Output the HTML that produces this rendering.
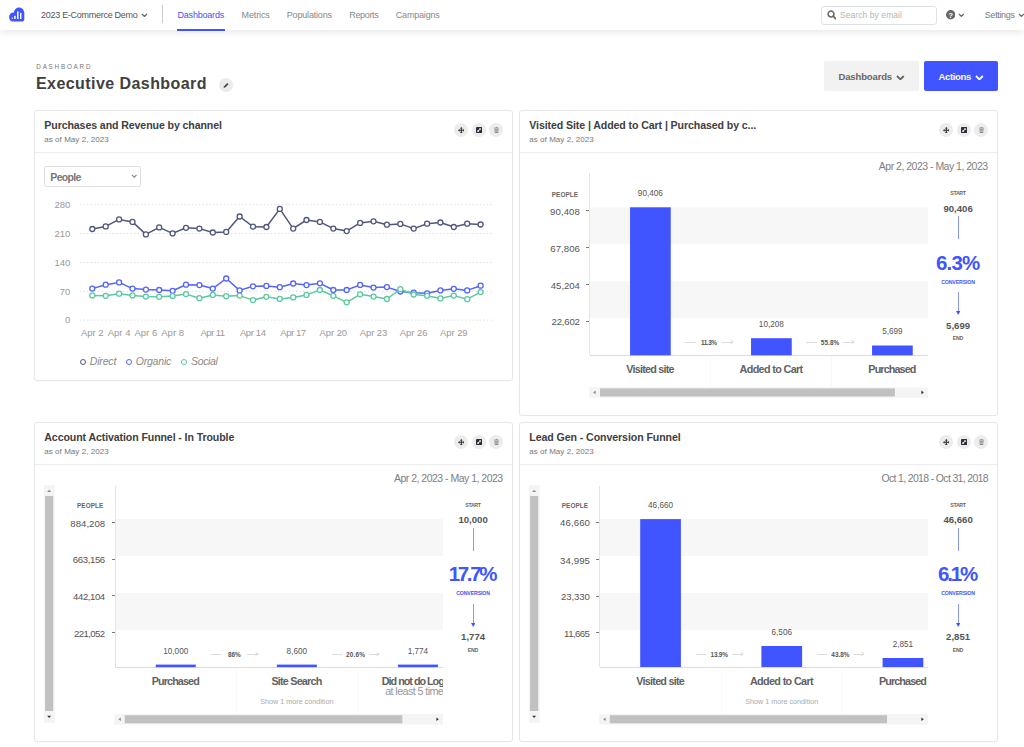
<!DOCTYPE html>
<html><head><meta charset="utf-8"><title>Executive Dashboard</title>
<style>
*{box-sizing:border-box;margin:0;padding:0}
html,body{width:1024px;height:747px;overflow:hidden;background:#fff;font-family:"Liberation Sans",sans-serif;color:#444}
.t{position:absolute;white-space:nowrap;line-height:1}
.abs{position:absolute}
.card{position:absolute;background:#fff;border:1px solid #e6e6e6;border-radius:3px;box-shadow:0 0 2px rgba(0,0,0,0.04)}
.hsep{position:absolute;left:0;right:0;height:1px;background:#ececec}
.ic{position:absolute;width:14px;height:14px;border-radius:50%;background:#ececec}
.band{position:absolute;background:#f6f6f6}
.bar{position:absolute;background:#4054ff}
</style></head><body>

<div class="abs" style="left:0;top:0;width:1024px;height:30px;background:#fff;box-shadow:0 2px 8px rgba(0,0,0,0.10)"></div>
<svg class="abs" style="left:8.8px;top:6.8px" width="16" height="15" viewBox="0 0 16 15">
<path d="M3.9 14.6 C1.6 14.6 0.1 12.6 0.1 10 C0.1 7.3 2.1 5.3 4.7 5.4 C5.3 2.4 7.3 0.4 10 0.4 C13 0.4 15.3 2.8 15.3 6 L15.3 12.2 C15.3 13.6 14.3 14.6 12.9 14.6 Z" fill="#4054ff"/>
<rect x="2.7" y="10.4" width="1.2" height="1.6" rx="0.4" fill="#fff" opacity="0.9"/>
<rect x="5.2" y="8.7" width="1.45" height="3.3" rx="0.5" fill="#fff"/>
<rect x="8.05" y="4.2" width="1.45" height="7.8" rx="0.5" fill="#fff"/>
<rect x="11.0" y="5.8" width="1.4" height="6.2" rx="0.5" fill="#fff"/>
</svg>
<div class="t" style="left:41px;top:15px;font-size:9px;color:#555;font-weight:normal;transform:translate(0,-50%);letter-spacing:-0.277px;margin-right:0.277px;">2023 E-Commerce Demo</div>
<svg class="abs" style="left:140.5px;top:12.95px" width="7" height="4.5" viewBox="0 0 7 4.5"><path d="M1 1 L3.5 3.5 L6 1" fill="none" stroke="#666" stroke-width="1.2"/></svg>
<div class="abs" style="left:161.5px;top:5px;width:1px;height:18px;background:#ccc"></div>
<div class="t" style="left:177.5px;top:15px;font-size:9px;color:#4054ff;font-weight:normal;transform:translate(0,-50%);letter-spacing:-0.203px;margin-right:0.203px;">Dashboards</div>
<div class="abs" style="left:177px;top:29px;width:48px;height:2px;background:#4054ff"></div>
<div class="t" style="left:241.5px;top:15px;font-size:9px;color:#888;font-weight:normal;transform:translate(0,-50%);letter-spacing:-0.114px;margin-right:0.114px;">Metrics</div>
<div class="t" style="left:286.8px;top:15px;font-size:9px;color:#888;font-weight:normal;transform:translate(0,-50%);letter-spacing:-0.185px;margin-right:0.185px;">Populations</div>
<div class="t" style="left:349.3px;top:15px;font-size:9px;color:#888;font-weight:normal;transform:translate(0,-50%);letter-spacing:-0.359px;margin-right:0.359px;">Reports</div>
<div class="t" style="left:395.8px;top:15px;font-size:9px;color:#888;font-weight:normal;transform:translate(0,-50%);letter-spacing:-0.192px;margin-right:0.192px;">Campaigns</div>
<div class="abs" style="left:821px;top:5.5px;width:116px;height:19px;border:1px solid #dce2e7;border-radius:3px;background:#fff"></div>
<svg class="abs" style="left:826.6px;top:10.4px" width="9.8" height="9.8" viewBox="0 0 9 9"><circle cx="3.7" cy="3.7" r="2.7" fill="none" stroke="#666" stroke-width="1.4"/><path d="M5.7 5.7 L8 8" stroke="#666" stroke-width="1.6" stroke-linecap="round"/></svg>
<div class="t" style="left:840px;top:15.3px;font-size:8.5px;color:#b5b5b5;font-weight:normal;transform:translate(0,-50%);letter-spacing:0.070px;margin-right:-0.070px;">Search by email</div>
<svg class="abs" style="left:945.6px;top:10.2px" width="9.4" height="9.4" viewBox="0 0 9 9"><circle cx="4.5" cy="4.5" r="4.5" fill="#666"/><text x="4.5" y="7.2" font-size="7.5" font-weight="bold" text-anchor="middle" fill="#fff" font-family="Liberation Sans">?</text></svg>
<svg class="abs" style="left:958.2px;top:13.0px" width="6.8" height="4.4" viewBox="0 0 6.8 4.4"><path d="M1 1 L3.4 3.4 L5.8 1" fill="none" stroke="#666" stroke-width="1.2"/></svg>
<div class="t" style="left:984.8px;top:15px;font-size:9px;color:#7a7a7a;font-weight:normal;transform:translate(0,-50%);letter-spacing:-0.340px;margin-right:0.340px;">Settings</div>
<svg class="abs" style="left:1017.9px;top:13.0px" width="6.8" height="4.4" viewBox="0 0 6.8 4.4"><path d="M1 1 L3.4 3.4 L5.8 1" fill="none" stroke="#666" stroke-width="1.2"/></svg>
<div class="t" style="left:36.3px;top:66.9px;font-size:6.3px;color:#777;font-weight:normal;transform:translate(0,-50%);letter-spacing:1.788px;margin-right:-1.788px;">DASHBOARD</div>
<div class="t" style="left:36px;top:84.4px;font-size:16px;color:#404040;font-weight:bold;transform:translate(0,-50%);letter-spacing:0.435px;margin-right:-0.435px;">Executive Dashboard</div>
<div class="abs" style="left:219px;top:78.2px;width:14px;height:14px;border-radius:50%;background:#ebebeb"></div>
<svg class="abs" style="left:222.8px;top:82px" width="6.5" height="6.5" viewBox="0 0 6 6"><path d="M0.6 5.4 L0.9 3.9 L3.9 0.9 L5.1 2.1 L2.1 5.1 Z" fill="#444"/></svg>
<div class="abs" style="left:824px;top:61px;width:95px;height:30.4px;background:#f2f2f2;border-radius:2px"></div>
<div class="t" style="left:838.5px;top:77.2px;font-size:9.5px;color:#666;font-weight:bold;transform:translate(0,-50%);letter-spacing:-0.140px;margin-right:0.140px;">Dashboards</div>
<svg class="abs" style="left:896.4px;top:74.8px" width="8.8" height="5.4" viewBox="0 0 8.8 5.4"><path d="M1 1 L4.4 4.4 L7.8 1" fill="none" stroke="#666" stroke-width="1.8"/></svg>
<div class="abs" style="left:924px;top:61px;width:74px;height:30.4px;background:#4054ff;border-radius:2px"></div>
<div class="t" style="left:938.5px;top:77.2px;font-size:9.5px;color:#fff;font-weight:bold;transform:translate(0,-50%);letter-spacing:-0.334px;margin-right:0.334px;">Actions</div>
<svg class="abs" style="left:974.9px;top:74.8px" width="8.8" height="5.4" viewBox="0 0 8.8 5.4"><path d="M1 1 L4.4 4.4 L7.8 1" fill="none" stroke="#fff" stroke-width="1.8"/></svg>
<div class="card" style="left:34px;top:110px;width:479px;height:271px"></div>
<div class="abs" style="left:35px;top:152px;width:477px;height:1px;background:#ececec"></div>
<div class="t" style="left:44.3px;top:124.8px;font-size:10.6px;color:#404040;font-weight:bold;transform:translate(0,-50%);letter-spacing:-0.099px;margin-right:0.099px;">Purchases and Revenue by channel</div>
<div class="t" style="left:44.3px;top:139.9px;font-size:8px;color:#777;font-weight:normal;transform:translate(0,-50%);letter-spacing:0.047px;margin-right:-0.047px;">as of May 2, 2023</div>
<div class="ic" style="left:454.2px;top:122.80000000000001px"></div>
<svg class="abs" style="left:457.9px;top:126.50000000000001px" width="6.6" height="6.6" viewBox="0 0 7 7"><path d="M3.5 0 L5 1.6 L4.05 1.6 L4.05 2.95 L5.4 2.95 L5.4 2 L7 3.5 L5.4 5 L5.4 4.05 L4.05 4.05 L4.05 5.4 L5 5.4 L3.5 7 L2 5.4 L2.95 5.4 L2.95 4.05 L1.6 4.05 L1.6 5 L0 3.5 L1.6 2 L1.6 2.95 L2.95 2.95 L2.95 1.6 L2 1.6 Z" fill="#2e2e3a"/></svg>
<div class="ic" style="left:471.7px;top:122.80000000000001px"></div>
<svg class="abs" style="left:475.59999999999997px;top:126.70000000000002px" width="6.2" height="6.2" viewBox="0 0 64 64"><rect x="0" y="0" width="64" height="64" rx="10" fill="#2e2e3a"/><path d="M30 13 L51 13 L51 34 L44 27 L27 44 L34 51 L13 51 L13 30 L20 37 L37 20 Z" fill="#eee"/></svg>
<div class="ic" style="left:489.2px;top:122.80000000000001px"></div>
<svg class="abs" style="left:493.7px;top:126.80000000000001px" width="5" height="6" viewBox="0 0 5 6"><path d="M0 0.8 H5 V1.5 H0 Z M1.7 0.1 H3.3 V0.8 H1.7 Z M0.5 2 H4.5 L4.2 6 H0.8 Z" fill="#8a8a8a"/><path d="M0.9 3.1 H4.1 M1 4.4 H4" stroke="#eee" stroke-width="0.5"/></svg>
<div class="card" style="left:519px;top:110px;width:479px;height:306px"></div>
<div class="abs" style="left:520px;top:152px;width:477px;height:1px;background:#ececec"></div>
<div class="t" style="left:529.3px;top:124.8px;font-size:10.6px;color:#404040;font-weight:bold;transform:translate(0,-50%);letter-spacing:-0.095px;margin-right:0.095px;">Visited Site | Added to Cart | Purchased by c...</div>
<div class="t" style="left:529.3px;top:139.9px;font-size:8px;color:#777;font-weight:normal;transform:translate(0,-50%);letter-spacing:0.047px;margin-right:-0.047px;">as of May 2, 2023</div>
<div class="ic" style="left:939.2px;top:122.80000000000001px"></div>
<svg class="abs" style="left:942.9000000000001px;top:126.50000000000001px" width="6.6" height="6.6" viewBox="0 0 7 7"><path d="M3.5 0 L5 1.6 L4.05 1.6 L4.05 2.95 L5.4 2.95 L5.4 2 L7 3.5 L5.4 5 L5.4 4.05 L4.05 4.05 L4.05 5.4 L5 5.4 L3.5 7 L2 5.4 L2.95 5.4 L2.95 4.05 L1.6 4.05 L1.6 5 L0 3.5 L1.6 2 L1.6 2.95 L2.95 2.95 L2.95 1.6 L2 1.6 Z" fill="#2e2e3a"/></svg>
<div class="ic" style="left:956.7px;top:122.80000000000001px"></div>
<svg class="abs" style="left:960.6px;top:126.70000000000002px" width="6.2" height="6.2" viewBox="0 0 64 64"><rect x="0" y="0" width="64" height="64" rx="10" fill="#2e2e3a"/><path d="M30 13 L51 13 L51 34 L44 27 L27 44 L34 51 L13 51 L13 30 L20 37 L37 20 Z" fill="#eee"/></svg>
<div class="ic" style="left:974.2px;top:122.80000000000001px"></div>
<svg class="abs" style="left:978.7px;top:126.80000000000001px" width="5" height="6" viewBox="0 0 5 6"><path d="M0 0.8 H5 V1.5 H0 Z M1.7 0.1 H3.3 V0.8 H1.7 Z M0.5 2 H4.5 L4.2 6 H0.8 Z" fill="#8a8a8a"/><path d="M0.9 3.1 H4.1 M1 4.4 H4" stroke="#eee" stroke-width="0.5"/></svg>
<div class="card" style="left:34px;top:422px;width:479px;height:320px"></div>
<div class="abs" style="left:35px;top:464px;width:477px;height:1px;background:#ececec"></div>
<div class="t" style="left:44.3px;top:436.8px;font-size:10.6px;color:#404040;font-weight:bold;transform:translate(0,-50%);letter-spacing:-0.104px;margin-right:0.104px;">Account Activation Funnel - In Trouble</div>
<div class="t" style="left:44.3px;top:451.9px;font-size:8px;color:#777;font-weight:normal;transform:translate(0,-50%);letter-spacing:0.047px;margin-right:-0.047px;">as of May 2, 2023</div>
<div class="ic" style="left:454.2px;top:434.8px"></div>
<svg class="abs" style="left:457.9px;top:438.5px" width="6.6" height="6.6" viewBox="0 0 7 7"><path d="M3.5 0 L5 1.6 L4.05 1.6 L4.05 2.95 L5.4 2.95 L5.4 2 L7 3.5 L5.4 5 L5.4 4.05 L4.05 4.05 L4.05 5.4 L5 5.4 L3.5 7 L2 5.4 L2.95 5.4 L2.95 4.05 L1.6 4.05 L1.6 5 L0 3.5 L1.6 2 L1.6 2.95 L2.95 2.95 L2.95 1.6 L2 1.6 Z" fill="#2e2e3a"/></svg>
<div class="ic" style="left:471.7px;top:434.8px"></div>
<svg class="abs" style="left:475.59999999999997px;top:438.7px" width="6.2" height="6.2" viewBox="0 0 64 64"><rect x="0" y="0" width="64" height="64" rx="10" fill="#2e2e3a"/><path d="M30 13 L51 13 L51 34 L44 27 L27 44 L34 51 L13 51 L13 30 L20 37 L37 20 Z" fill="#eee"/></svg>
<div class="ic" style="left:489.2px;top:434.8px"></div>
<svg class="abs" style="left:493.7px;top:438.8px" width="5" height="6" viewBox="0 0 5 6"><path d="M0 0.8 H5 V1.5 H0 Z M1.7 0.1 H3.3 V0.8 H1.7 Z M0.5 2 H4.5 L4.2 6 H0.8 Z" fill="#8a8a8a"/><path d="M0.9 3.1 H4.1 M1 4.4 H4" stroke="#eee" stroke-width="0.5"/></svg>
<div class="card" style="left:519px;top:422px;width:479px;height:320px"></div>
<div class="abs" style="left:520px;top:464px;width:477px;height:1px;background:#ececec"></div>
<div class="t" style="left:529.3px;top:436.8px;font-size:10.6px;color:#404040;font-weight:bold;transform:translate(0,-50%);letter-spacing:-0.083px;margin-right:0.083px;">Lead Gen - Conversion Funnel</div>
<div class="t" style="left:529.3px;top:451.9px;font-size:8px;color:#777;font-weight:normal;transform:translate(0,-50%);letter-spacing:0.047px;margin-right:-0.047px;">as of May 2, 2023</div>
<div class="ic" style="left:939.2px;top:434.8px"></div>
<svg class="abs" style="left:942.9000000000001px;top:438.5px" width="6.6" height="6.6" viewBox="0 0 7 7"><path d="M3.5 0 L5 1.6 L4.05 1.6 L4.05 2.95 L5.4 2.95 L5.4 2 L7 3.5 L5.4 5 L5.4 4.05 L4.05 4.05 L4.05 5.4 L5 5.4 L3.5 7 L2 5.4 L2.95 5.4 L2.95 4.05 L1.6 4.05 L1.6 5 L0 3.5 L1.6 2 L1.6 2.95 L2.95 2.95 L2.95 1.6 L2 1.6 Z" fill="#2e2e3a"/></svg>
<div class="ic" style="left:956.7px;top:434.8px"></div>
<svg class="abs" style="left:960.6px;top:438.7px" width="6.2" height="6.2" viewBox="0 0 64 64"><rect x="0" y="0" width="64" height="64" rx="10" fill="#2e2e3a"/><path d="M30 13 L51 13 L51 34 L44 27 L27 44 L34 51 L13 51 L13 30 L20 37 L37 20 Z" fill="#eee"/></svg>
<div class="ic" style="left:974.2px;top:434.8px"></div>
<svg class="abs" style="left:978.7px;top:438.8px" width="5" height="6" viewBox="0 0 5 6"><path d="M0 0.8 H5 V1.5 H0 Z M1.7 0.1 H3.3 V0.8 H1.7 Z M0.5 2 H4.5 L4.2 6 H0.8 Z" fill="#8a8a8a"/><path d="M0.9 3.1 H4.1 M1 4.4 H4" stroke="#eee" stroke-width="0.5"/></svg>
<div class="abs" style="left:44px;top:165.5px;width:96.5px;height:21px;border:1px solid #e0e0e0;border-radius:2px;background:#fff"></div>
<div class="t" style="left:50.3px;top:176.8px;font-size:10.5px;color:#777;font-weight:bold;transform:translate(0,-50%);letter-spacing:-0.655px;margin-right:0.655px;">People</div>
<svg class="abs" style="left:130.95px;top:174.475px" width="6.5" height="4.25" viewBox="0 0 6.5 4.25"><path d="M1 1 L3.25 3.25 L5.5 1" fill="none" stroke="#888" stroke-width="1.1"/></svg>
<svg class="abs" style="left:0;top:190px" width="520" height="140" viewBox="0 190 520 140"><line x1="80" x2="492" y1="204.7" y2="204.7" stroke="#dcdcdc" stroke-width="1" stroke-dasharray="1.3 2.3"/><line x1="80" x2="492" y1="233.55" y2="233.55" stroke="#dcdcdc" stroke-width="1" stroke-dasharray="1.3 2.3"/><line x1="80" x2="492" y1="262.4" y2="262.4" stroke="#dcdcdc" stroke-width="1" stroke-dasharray="1.3 2.3"/><line x1="80" x2="492" y1="291.25" y2="291.25" stroke="#dcdcdc" stroke-width="1" stroke-dasharray="1.3 2.3"/><line x1="80" x2="492" y1="320.1" y2="320.1" stroke="#dcdcdc" stroke-width="1" stroke-dasharray="1.3 2.3"/><polyline points="92.3,229.0 105.7,226.4 119.1,219.4 132.5,221.9 145.9,234.4 159.2,227.4 172.6,233.4 186.0,227.8 199.4,228.6 212.8,232.5 226.2,231.9 239.6,216.5 253.0,226.6 266.4,227.0 279.8,208.9 293.2,228.6 306.5,220.0 319.9,221.9 333.3,228.6 346.7,231.1 360.1,222.9 373.5,221.3 386.9,224.7 400.3,223.9 413.7,228.6 427.1,223.7 440.4,222.5 453.8,227.0 467.2,223.7 480.6,224.5" fill="none" stroke="#4f587c" stroke-width="1.5" stroke-linejoin="round"/><circle cx="92.3" cy="229.0" r="2.5" fill="#fff" stroke="#4f587c" stroke-width="1.3"/><circle cx="105.7" cy="226.4" r="2.5" fill="#fff" stroke="#4f587c" stroke-width="1.3"/><circle cx="119.1" cy="219.4" r="2.5" fill="#fff" stroke="#4f587c" stroke-width="1.3"/><circle cx="132.5" cy="221.9" r="2.5" fill="#fff" stroke="#4f587c" stroke-width="1.3"/><circle cx="145.9" cy="234.4" r="2.5" fill="#fff" stroke="#4f587c" stroke-width="1.3"/><circle cx="159.2" cy="227.4" r="2.5" fill="#fff" stroke="#4f587c" stroke-width="1.3"/><circle cx="172.6" cy="233.4" r="2.5" fill="#fff" stroke="#4f587c" stroke-width="1.3"/><circle cx="186.0" cy="227.8" r="2.5" fill="#fff" stroke="#4f587c" stroke-width="1.3"/><circle cx="199.4" cy="228.6" r="2.5" fill="#fff" stroke="#4f587c" stroke-width="1.3"/><circle cx="212.8" cy="232.5" r="2.5" fill="#fff" stroke="#4f587c" stroke-width="1.3"/><circle cx="226.2" cy="231.9" r="2.5" fill="#fff" stroke="#4f587c" stroke-width="1.3"/><circle cx="239.6" cy="216.5" r="2.5" fill="#fff" stroke="#4f587c" stroke-width="1.3"/><circle cx="253.0" cy="226.6" r="2.5" fill="#fff" stroke="#4f587c" stroke-width="1.3"/><circle cx="266.4" cy="227.0" r="2.5" fill="#fff" stroke="#4f587c" stroke-width="1.3"/><circle cx="279.8" cy="208.9" r="2.5" fill="#fff" stroke="#4f587c" stroke-width="1.3"/><circle cx="293.2" cy="228.6" r="2.5" fill="#fff" stroke="#4f587c" stroke-width="1.3"/><circle cx="306.5" cy="220.0" r="2.5" fill="#fff" stroke="#4f587c" stroke-width="1.3"/><circle cx="319.9" cy="221.9" r="2.5" fill="#fff" stroke="#4f587c" stroke-width="1.3"/><circle cx="333.3" cy="228.6" r="2.5" fill="#fff" stroke="#4f587c" stroke-width="1.3"/><circle cx="346.7" cy="231.1" r="2.5" fill="#fff" stroke="#4f587c" stroke-width="1.3"/><circle cx="360.1" cy="222.9" r="2.5" fill="#fff" stroke="#4f587c" stroke-width="1.3"/><circle cx="373.5" cy="221.3" r="2.5" fill="#fff" stroke="#4f587c" stroke-width="1.3"/><circle cx="386.9" cy="224.7" r="2.5" fill="#fff" stroke="#4f587c" stroke-width="1.3"/><circle cx="400.3" cy="223.9" r="2.5" fill="#fff" stroke="#4f587c" stroke-width="1.3"/><circle cx="413.7" cy="228.6" r="2.5" fill="#fff" stroke="#4f587c" stroke-width="1.3"/><circle cx="427.1" cy="223.7" r="2.5" fill="#fff" stroke="#4f587c" stroke-width="1.3"/><circle cx="440.4" cy="222.5" r="2.5" fill="#fff" stroke="#4f587c" stroke-width="1.3"/><circle cx="453.8" cy="227.0" r="2.5" fill="#fff" stroke="#4f587c" stroke-width="1.3"/><circle cx="467.2" cy="223.7" r="2.5" fill="#fff" stroke="#4f587c" stroke-width="1.3"/><circle cx="480.6" cy="224.5" r="2.5" fill="#fff" stroke="#4f587c" stroke-width="1.3"/><polyline points="92.3,288.6 105.7,284.7 119.1,282.4 132.5,288.6 145.9,289.6 159.2,290.0 172.6,290.8 186.0,284.7 199.4,285.1 212.8,288.6 226.2,278.5 239.6,290.4 253.0,286.3 266.4,285.9 279.8,287.2 293.2,283.5 306.5,285.1 319.9,283.3 333.3,290.0 346.7,290.0 360.1,284.9 373.5,287.6 386.9,287.1 400.3,291.5 413.7,292.7 427.1,293.3 440.4,290.4 453.8,288.8 467.2,290.4 480.6,285.7" fill="none" stroke="#5564fb" stroke-width="1.5" stroke-linejoin="round"/><circle cx="92.3" cy="288.6" r="2.5" fill="#fff" stroke="#5564fb" stroke-width="1.3"/><circle cx="105.7" cy="284.7" r="2.5" fill="#fff" stroke="#5564fb" stroke-width="1.3"/><circle cx="119.1" cy="282.4" r="2.5" fill="#fff" stroke="#5564fb" stroke-width="1.3"/><circle cx="132.5" cy="288.6" r="2.5" fill="#fff" stroke="#5564fb" stroke-width="1.3"/><circle cx="145.9" cy="289.6" r="2.5" fill="#fff" stroke="#5564fb" stroke-width="1.3"/><circle cx="159.2" cy="290.0" r="2.5" fill="#fff" stroke="#5564fb" stroke-width="1.3"/><circle cx="172.6" cy="290.8" r="2.5" fill="#fff" stroke="#5564fb" stroke-width="1.3"/><circle cx="186.0" cy="284.7" r="2.5" fill="#fff" stroke="#5564fb" stroke-width="1.3"/><circle cx="199.4" cy="285.1" r="2.5" fill="#fff" stroke="#5564fb" stroke-width="1.3"/><circle cx="212.8" cy="288.6" r="2.5" fill="#fff" stroke="#5564fb" stroke-width="1.3"/><circle cx="226.2" cy="278.5" r="2.5" fill="#fff" stroke="#5564fb" stroke-width="1.3"/><circle cx="239.6" cy="290.4" r="2.5" fill="#fff" stroke="#5564fb" stroke-width="1.3"/><circle cx="253.0" cy="286.3" r="2.5" fill="#fff" stroke="#5564fb" stroke-width="1.3"/><circle cx="266.4" cy="285.9" r="2.5" fill="#fff" stroke="#5564fb" stroke-width="1.3"/><circle cx="279.8" cy="287.2" r="2.5" fill="#fff" stroke="#5564fb" stroke-width="1.3"/><circle cx="293.2" cy="283.5" r="2.5" fill="#fff" stroke="#5564fb" stroke-width="1.3"/><circle cx="306.5" cy="285.1" r="2.5" fill="#fff" stroke="#5564fb" stroke-width="1.3"/><circle cx="319.9" cy="283.3" r="2.5" fill="#fff" stroke="#5564fb" stroke-width="1.3"/><circle cx="333.3" cy="290.0" r="2.5" fill="#fff" stroke="#5564fb" stroke-width="1.3"/><circle cx="346.7" cy="290.0" r="2.5" fill="#fff" stroke="#5564fb" stroke-width="1.3"/><circle cx="360.1" cy="284.9" r="2.5" fill="#fff" stroke="#5564fb" stroke-width="1.3"/><circle cx="373.5" cy="287.6" r="2.5" fill="#fff" stroke="#5564fb" stroke-width="1.3"/><circle cx="386.9" cy="287.1" r="2.5" fill="#fff" stroke="#5564fb" stroke-width="1.3"/><circle cx="400.3" cy="291.5" r="2.5" fill="#fff" stroke="#5564fb" stroke-width="1.3"/><circle cx="413.7" cy="292.7" r="2.5" fill="#fff" stroke="#5564fb" stroke-width="1.3"/><circle cx="427.1" cy="293.3" r="2.5" fill="#fff" stroke="#5564fb" stroke-width="1.3"/><circle cx="440.4" cy="290.4" r="2.5" fill="#fff" stroke="#5564fb" stroke-width="1.3"/><circle cx="453.8" cy="288.8" r="2.5" fill="#fff" stroke="#5564fb" stroke-width="1.3"/><circle cx="467.2" cy="290.4" r="2.5" fill="#fff" stroke="#5564fb" stroke-width="1.3"/><circle cx="480.6" cy="285.7" r="2.5" fill="#fff" stroke="#5564fb" stroke-width="1.3"/><polyline points="92.3,295.4 105.7,295.8 119.1,293.7 132.5,295.4 145.9,296.6 159.2,296.8 172.6,296.0 186.0,294.1 199.4,298.2 212.8,294.9 226.2,296.2 239.6,295.6 253.0,300.1 266.4,296.8 279.8,298.9 293.2,297.4 306.5,294.9 319.9,290.0 333.3,295.8 346.7,302.3 360.1,294.3 373.5,296.6 386.9,299.0 400.3,289.2 413.7,294.5 427.1,295.8 440.4,298.4 453.8,295.6 467.2,299.2 480.6,292.1" fill="none" stroke="#5cc9a0" stroke-width="1.5" stroke-linejoin="round"/><circle cx="92.3" cy="295.4" r="2.5" fill="#fff" stroke="#5cc9a0" stroke-width="1.3"/><circle cx="105.7" cy="295.8" r="2.5" fill="#fff" stroke="#5cc9a0" stroke-width="1.3"/><circle cx="119.1" cy="293.7" r="2.5" fill="#fff" stroke="#5cc9a0" stroke-width="1.3"/><circle cx="132.5" cy="295.4" r="2.5" fill="#fff" stroke="#5cc9a0" stroke-width="1.3"/><circle cx="145.9" cy="296.6" r="2.5" fill="#fff" stroke="#5cc9a0" stroke-width="1.3"/><circle cx="159.2" cy="296.8" r="2.5" fill="#fff" stroke="#5cc9a0" stroke-width="1.3"/><circle cx="172.6" cy="296.0" r="2.5" fill="#fff" stroke="#5cc9a0" stroke-width="1.3"/><circle cx="186.0" cy="294.1" r="2.5" fill="#fff" stroke="#5cc9a0" stroke-width="1.3"/><circle cx="199.4" cy="298.2" r="2.5" fill="#fff" stroke="#5cc9a0" stroke-width="1.3"/><circle cx="212.8" cy="294.9" r="2.5" fill="#fff" stroke="#5cc9a0" stroke-width="1.3"/><circle cx="226.2" cy="296.2" r="2.5" fill="#fff" stroke="#5cc9a0" stroke-width="1.3"/><circle cx="239.6" cy="295.6" r="2.5" fill="#fff" stroke="#5cc9a0" stroke-width="1.3"/><circle cx="253.0" cy="300.1" r="2.5" fill="#fff" stroke="#5cc9a0" stroke-width="1.3"/><circle cx="266.4" cy="296.8" r="2.5" fill="#fff" stroke="#5cc9a0" stroke-width="1.3"/><circle cx="279.8" cy="298.9" r="2.5" fill="#fff" stroke="#5cc9a0" stroke-width="1.3"/><circle cx="293.2" cy="297.4" r="2.5" fill="#fff" stroke="#5cc9a0" stroke-width="1.3"/><circle cx="306.5" cy="294.9" r="2.5" fill="#fff" stroke="#5cc9a0" stroke-width="1.3"/><circle cx="319.9" cy="290.0" r="2.5" fill="#fff" stroke="#5cc9a0" stroke-width="1.3"/><circle cx="333.3" cy="295.8" r="2.5" fill="#fff" stroke="#5cc9a0" stroke-width="1.3"/><circle cx="346.7" cy="302.3" r="2.5" fill="#fff" stroke="#5cc9a0" stroke-width="1.3"/><circle cx="360.1" cy="294.3" r="2.5" fill="#fff" stroke="#5cc9a0" stroke-width="1.3"/><circle cx="373.5" cy="296.6" r="2.5" fill="#fff" stroke="#5cc9a0" stroke-width="1.3"/><circle cx="386.9" cy="299.0" r="2.5" fill="#fff" stroke="#5cc9a0" stroke-width="1.3"/><circle cx="400.3" cy="289.2" r="2.5" fill="#fff" stroke="#5cc9a0" stroke-width="1.3"/><circle cx="413.7" cy="294.5" r="2.5" fill="#fff" stroke="#5cc9a0" stroke-width="1.3"/><circle cx="427.1" cy="295.8" r="2.5" fill="#fff" stroke="#5cc9a0" stroke-width="1.3"/><circle cx="440.4" cy="298.4" r="2.5" fill="#fff" stroke="#5cc9a0" stroke-width="1.3"/><circle cx="453.8" cy="295.6" r="2.5" fill="#fff" stroke="#5cc9a0" stroke-width="1.3"/><circle cx="467.2" cy="299.2" r="2.5" fill="#fff" stroke="#5cc9a0" stroke-width="1.3"/><circle cx="480.6" cy="292.1" r="2.5" fill="#fff" stroke="#5cc9a0" stroke-width="1.3"/></svg>
<div class="t" style="left:70.3px;top:205.0px;font-size:9.5px;color:#999;font-weight:normal;transform:translate(-100%,-50%);">280</div>
<div class="t" style="left:70.3px;top:233.85000000000002px;font-size:9.5px;color:#999;font-weight:normal;transform:translate(-100%,-50%);">210</div>
<div class="t" style="left:70.3px;top:262.7px;font-size:9.5px;color:#999;font-weight:normal;transform:translate(-100%,-50%);">140</div>
<div class="t" style="left:70.3px;top:291.55px;font-size:9.5px;color:#999;font-weight:normal;transform:translate(-100%,-50%);">70</div>
<div class="t" style="left:70.3px;top:320.40000000000003px;font-size:9.5px;color:#999;font-weight:normal;transform:translate(-100%,-50%);">0</div>
<div class="t" style="left:92.3px;top:333.2px;font-size:9.5px;color:#999;font-weight:normal;transform:translate(calc(-50% + -0.031px),-50%);letter-spacing:-0.061px;margin-right:0.061px;">Apr 2</div>
<div class="t" style="left:119.08px;top:333.2px;font-size:9.5px;color:#999;font-weight:normal;transform:translate(calc(-50% + 0.009px),-50%);letter-spacing:0.019px;margin-right:-0.019px;">Apr 4</div>
<div class="t" style="left:145.86px;top:333.2px;font-size:9.5px;color:#999;font-weight:normal;transform:translate(calc(-50% + 0.009px),-50%);letter-spacing:0.019px;margin-right:-0.019px;">Apr 6</div>
<div class="t" style="left:172.64px;top:333.2px;font-size:9.5px;color:#999;font-weight:normal;transform:translate(calc(-50% + 0.009px),-50%);letter-spacing:0.019px;margin-right:-0.019px;">Apr 8</div>
<div class="t" style="left:212.81px;top:333.2px;font-size:9.5px;color:#999;font-weight:normal;transform:translate(calc(-50% + -0.282px),-50%);letter-spacing:-0.564px;margin-right:0.564px;">Apr 11</div>
<div class="t" style="left:252.98000000000002px;top:333.2px;font-size:9.5px;color:#999;font-weight:normal;transform:translate(calc(-50% + -0.183px),-50%);letter-spacing:-0.365px;margin-right:0.365px;">Apr 14</div>
<div class="t" style="left:293.15000000000003px;top:333.2px;font-size:9.5px;color:#999;font-weight:normal;transform:translate(calc(-50% + -0.216px),-50%);letter-spacing:-0.432px;margin-right:0.432px;">Apr 17</div>
<div class="t" style="left:333.32px;top:333.2px;font-size:9.5px;color:#999;font-weight:normal;transform:translate(calc(-50% + -0.033px),-50%);letter-spacing:-0.065px;margin-right:0.065px;">Apr 20</div>
<div class="t" style="left:373.49px;top:333.2px;font-size:9.5px;color:#999;font-weight:normal;transform:translate(calc(-50% + -0.049px),-50%);letter-spacing:-0.098px;margin-right:0.098px;">Apr 23</div>
<div class="t" style="left:413.66px;top:333.2px;font-size:9.5px;color:#999;font-weight:normal;transform:translate(calc(-50% + -0.033px),-50%);letter-spacing:-0.065px;margin-right:0.065px;">Apr 26</div>
<div class="t" style="left:453.83000000000004px;top:333.2px;font-size:9.5px;color:#999;font-weight:normal;transform:translate(calc(-50% + -0.033px),-50%);letter-spacing:-0.065px;margin-right:0.065px;">Apr 29</div>
<div class="abs" style="left:80.10000000000001px;top:358.9px;width:6.2px;height:6.2px;border-radius:50%;border:1.6px solid #4f587c;background:#fff"></div>
<div class="t" style="left:89.8px;top:360.8px;font-size:10.5px;color:#8a8a8a;font-weight:normal;transform:translate(0,-50%);letter-spacing:-0.170px;margin-right:0.170px;font-style:italic;">Direct</div>
<div class="abs" style="left:125.80000000000001px;top:358.9px;width:6.2px;height:6.2px;border-radius:50%;border:1.6px solid #5564fb;background:#fff"></div>
<div class="t" style="left:135.7px;top:360.8px;font-size:10.5px;color:#8a8a8a;font-weight:normal;transform:translate(0,-50%);letter-spacing:-0.195px;margin-right:0.195px;font-style:italic;">Organic</div>
<div class="abs" style="left:181.20000000000002px;top:358.9px;width:6.2px;height:6.2px;border-radius:50%;border:1.6px solid #5cc9a0;background:#fff"></div>
<div class="t" style="left:191.1px;top:360.8px;font-size:10.5px;color:#8a8a8a;font-weight:normal;transform:translate(0,-50%);letter-spacing:-0.367px;margin-right:0.367px;font-style:italic;">Social</div>
<svg class="abs" style="left:0;top:0" width="1024" height="747" viewBox="0 0 1024 747"><rect x="589.9" y="207.3" width="338.1" height="37.0" fill="#f7f7f7"/><rect x="589.9" y="281.3" width="338.1" height="37.0" fill="#f7f7f7"/></svg>
<div class="abs" style="left:589.4px;top:173.3px;width:1px;height:182.0px;background:#e4e4e4"></div>
<div class="abs" style="left:589.9px;top:354.8px;width:338.1px;height:1px;background:#dcdcdc"></div>
<div class="abs" style="left:586.4px;top:210.2px;width:3px;height:1px;background:#777"></div>
<div class="t" style="left:579.9px;top:212.1px;font-size:9.6px;color:#555;font-weight:normal;transform:translate(calc(-100% + 0.106px),-50%);letter-spacing:0.106px;margin-right:-0.106px;">90,408</div>
<div class="abs" style="left:586.4px;top:246.9px;width:3px;height:1px;background:#777"></div>
<div class="t" style="left:579.9px;top:248.8px;font-size:9.6px;color:#555;font-weight:normal;transform:translate(calc(-100% + 0.039px),-50%);letter-spacing:0.039px;margin-right:-0.039px;">67,806</div>
<div class="abs" style="left:586.4px;top:283.6px;width:3px;height:1px;background:#777"></div>
<div class="t" style="left:579.9px;top:285.5px;font-size:9.6px;color:#555;font-weight:normal;transform:translate(calc(-100% + -0.061px),-50%);letter-spacing:-0.061px;margin-right:0.061px;">45,204</div>
<div class="abs" style="left:586.4px;top:320.5px;width:3px;height:1px;background:#777"></div>
<div class="t" style="left:579.9px;top:322.4px;font-size:9.6px;color:#555;font-weight:normal;transform:translate(calc(-100% + -0.194px),-50%);letter-spacing:-0.194px;margin-right:0.194px;">22,602</div>
<div class="t" style="left:564.9px;top:194.5px;font-size:6.4px;color:#666;font-weight:bold;transform:translate(calc(-50% + 0.036px),-50%);letter-spacing:0.073px;margin-right:-0.073px;">PEOPLE</div>
<div class="abs" style="left:589px;top:173px;width:339px;height:225.2px;overflow:hidden">
<svg class="abs" style="left:0;top:0" width="339" height="186"><rect x="41.05" y="34.30" width="40.7" height="148.00" fill="#4054ff"/></svg>
<div class="t" style="left:61.39999999999998px;top:21.20000000000001px;font-size:8.2px;color:#555;transform:translate(-50%,-50%)">90,406</div>
<svg class="abs" style="left:0;top:0" width="339" height="186"><rect x="162.05" y="165.20" width="40.7" height="17.10" fill="#4054ff"/></svg>
<div class="t" style="left:182.39999999999998px;top:152.1px;font-size:8.2px;color:#555;transform:translate(-50%,-50%)">10,208</div>
<svg class="abs" style="left:0;top:0" width="339" height="186"><rect x="283.05" y="172.50" width="40.7" height="9.80" fill="#4054ff"/></svg>
<div class="t" style="left:303.4px;top:159.4px;font-size:8.2px;color:#555;transform:translate(-50%,-50%)">5,699</div>
<div class="t" style="left:119.99999999999997px;top:169.79999999999998px;font-size:6.4px;color:#555;font-weight:bold;transform:translate(calc(-50% + -0.239px),-50%);letter-spacing:-0.479px;margin-right:0.479px;">11.3%</div>
<div class="abs" style="left:96.39999999999998px;top:168.7px;width:10.3px;height:1px;background:#ddd"></div>
<div class="abs" style="left:132.99999999999997px;top:168.7px;width:10px;height:1px;background:#ddd"></div>
<svg class="abs" style="left:140.89999999999998px;top:167.2px" width="4" height="4" viewBox="0 0 4 4"><path d="M0.5 0.3 L3.2 2 L0.5 3.7" fill="none" stroke="#ccc" stroke-width="0.8"/></svg>
<div class="t" style="left:240.99999999999997px;top:169.79999999999998px;font-size:6.4px;color:#555;font-weight:bold;transform:translate(calc(-50% + 0.045px),-50%);letter-spacing:0.091px;margin-right:-0.091px;">55.8%</div>
<div class="abs" style="left:217.39999999999998px;top:168.7px;width:10.3px;height:1px;background:#ddd"></div>
<div class="abs" style="left:253.99999999999997px;top:168.7px;width:10px;height:1px;background:#ddd"></div>
<svg class="abs" style="left:261.9px;top:167.2px" width="4" height="4" viewBox="0 0 4 4"><path d="M0.5 0.3 L3.2 2 L0.5 3.7" fill="none" stroke="#ccc" stroke-width="0.8"/></svg>
<div class="abs" style="left:121.39999999999998px;top:183.3px;width:1px;height:30.899999999999977px;background:#f9f9f9"></div>
<div class="abs" style="left:242.39999999999998px;top:183.3px;width:1px;height:30.899999999999977px;background:#f9f9f9"></div>
<div class="abs" style="left:363.4px;top:183.3px;width:1px;height:30.899999999999977px;background:#f9f9f9"></div>
<div class="t" style="left:61.39999999999998px;top:196.20000000000002px;font-size:10.8px;color:#626262;font-weight:bold;transform:translate(calc(-50% + -0.385px),-50%);letter-spacing:-0.769px;margin-right:0.769px;">Visited site</div>
<div class="t" style="left:182.39999999999998px;top:196.20000000000002px;font-size:10.8px;color:#626262;font-weight:bold;transform:translate(calc(-50% + -0.323px),-50%);letter-spacing:-0.646px;margin-right:0.646px;">Added to Cart</div>
<div class="t" style="left:303.4px;top:196.20000000000002px;font-size:10.8px;color:#626262;font-weight:bold;transform:translate(calc(-50% + -0.446px),-50%);letter-spacing:-0.892px;margin-right:0.892px;">Purchased</div>
</div>
<div class="t" style="left:988.1px;top:166.0px;font-size:10.5px;color:#808080;font-weight:normal;transform:translate(calc(-100% + -0.508px),-50%);letter-spacing:-0.508px;margin-right:0.508px;">Apr 2, 2023 - May 1, 2023</div>
<div class="t" style="left:958.1px;top:194.0px;font-size:5.2px;color:#666;font-weight:bold;transform:translate(calc(-50% + -0.175px),-50%);letter-spacing:-0.349px;margin-right:0.349px;">START</div>
<div class="t" style="left:958.1px;top:208.60000000000002px;font-size:9.6px;color:#555;font-weight:bold;transform:translate(-50%,-50%);">90,406</div>
<div class="abs" style="left:957.6px;top:216.3px;width:1px;height:23.2px;background:#8c96f9"></div>
<div class="t" style="left:958.1px;top:262.5px;font-size:20.5px;color:#4054ff;font-weight:bold;transform:translate(calc(-50% + -0.441px),-50%);letter-spacing:-0.881px;margin-right:0.881px;">6.3%</div>
<div class="t" style="left:958.1px;top:282.6px;font-size:5.2px;color:#4054ff;font-weight:bold;transform:translate(calc(-50% + -0.063px),-50%);letter-spacing:-0.126px;margin-right:0.126px;">CONVERSION</div>
<div class="abs" style="left:957.6px;top:291.8px;width:1px;height:20.5px;background:#8c96f9"></div>
<svg class="abs" style="left:955.9px;top:311.1px" width="4.4" height="4" viewBox="0 0 4.4 4"><path d="M0 0 L4.4 0 L2.2 4 Z" fill="#4054ff"/></svg>
<div class="t" style="left:958.1px;top:325.6px;font-size:9.6px;color:#555;font-weight:bold;transform:translate(-50%,-50%);">5,699</div>
<div class="t" style="left:958.1px;top:339.3px;font-size:5.2px;color:#666;font-weight:bold;transform:translate(calc(-50% + -0.130px),-50%);letter-spacing:-0.260px;margin-right:0.260px;">END</div>
<svg class="abs" style="left:0;top:0" width="1024" height="747" viewBox="0 0 1024 747"><rect x="589.2" y="387.2" width="338.8" height="10.5" fill="#f4f4f4"/><rect x="600" y="388.4" width="294.9" height="8.1" fill="#c1c1c1"/><path d="M595.6 390.59999999999997 L593.2 392.45 L595.6 394.3 Z" fill="#8a8a8a"/><path d="M921.4 390.59999999999997 L923.8 392.45 L921.4 394.3 Z" fill="#333"/></svg>
<svg class="abs" style="left:0;top:0" width="1024" height="747" viewBox="0 0 1024 747"><rect x="115.2" y="519.1" width="327.8" height="37.0" fill="#f7f7f7"/><rect x="115.2" y="593.1" width="327.8" height="37.0" fill="#f7f7f7"/></svg>
<div class="abs" style="left:114.7px;top:486px;width:1px;height:181.0px;background:#e4e4e4"></div>
<div class="abs" style="left:115.2px;top:666.5px;width:327.8px;height:1px;background:#dcdcdc"></div>
<div class="abs" style="left:111.7px;top:521.7px;width:3px;height:1px;background:#777"></div>
<div class="t" style="left:105.2px;top:523.6px;font-size:9.6px;color:#555;font-weight:normal;transform:translate(calc(-100% + 0.028px),-50%);letter-spacing:0.028px;margin-right:-0.028px;">884,208</div>
<div class="abs" style="left:111.7px;top:558.5px;width:3px;height:1px;background:#777"></div>
<div class="t" style="left:105.2px;top:560.4px;font-size:9.6px;color:#555;font-weight:normal;transform:translate(calc(-100% + -0.372px),-50%);letter-spacing:-0.372px;margin-right:0.372px;">663,156</div>
<div class="abs" style="left:111.7px;top:595.3px;width:3px;height:1px;background:#777"></div>
<div class="t" style="left:105.2px;top:597.1999999999999px;font-size:9.6px;color:#555;font-weight:normal;transform:translate(calc(-100% + -0.429px),-50%);letter-spacing:-0.429px;margin-right:0.429px;">442,104</div>
<div class="abs" style="left:111.7px;top:632.0px;width:3px;height:1px;background:#777"></div>
<div class="t" style="left:105.2px;top:633.9px;font-size:9.6px;color:#555;font-weight:normal;transform:translate(calc(-100% + -0.586px),-50%);letter-spacing:-0.586px;margin-right:0.586px;">221,052</div>
<div class="t" style="left:90.2px;top:506.00000000000006px;font-size:6.4px;color:#666;font-weight:bold;transform:translate(calc(-50% + 0.036px),-50%);letter-spacing:0.073px;margin-right:-0.073px;">PEOPLE</div>
<div class="abs" style="left:115px;top:486px;width:328px;height:239px;overflow:hidden">
<svg class="abs" style="left:0;top:0" width="328" height="185"><rect x="40.75" y="178.60" width="40" height="2.50" fill="#4054ff"/></svg>
<div class="t" style="left:60.75px;top:165.50000000000003px;font-size:8.2px;color:#555;transform:translate(-50%,-50%)">10,000</div>
<svg class="abs" style="left:0;top:0" width="328" height="185"><rect x="161.85" y="178.60" width="40" height="2.50" fill="#4054ff"/></svg>
<div class="t" style="left:181.84999999999997px;top:165.50000000000003px;font-size:8.2px;color:#555;transform:translate(-50%,-50%)">8,600</div>
<svg class="abs" style="left:0;top:0" width="328" height="185"><rect x="282.95" y="178.60" width="40" height="2.50" fill="#4054ff"/></svg>
<div class="t" style="left:302.95px;top:165.50000000000003px;font-size:8.2px;color:#555;transform:translate(-50%,-50%)">1,774</div>
<div class="t" style="left:119.39999999999999px;top:168.6px;font-size:6.4px;color:#555;font-weight:bold;transform:translate(calc(-50% + -0.052px),-50%);letter-spacing:-0.103px;margin-right:0.103px;">86%</div>
<div class="abs" style="left:95.8px;top:167.5px;width:10.3px;height:1px;background:#ddd"></div>
<div class="abs" style="left:132.4px;top:167.5px;width:10px;height:1px;background:#ddd"></div>
<svg class="abs" style="left:140.3px;top:166px" width="4" height="4" viewBox="0 0 4 4"><path d="M0.5 0.3 L3.2 2 L0.5 3.7" fill="none" stroke="#ccc" stroke-width="0.8"/></svg>
<div class="t" style="left:240.49999999999997px;top:168.6px;font-size:6.4px;color:#555;font-weight:bold;transform:translate(calc(-50% + 0.115px),-50%);letter-spacing:0.231px;margin-right:-0.231px;">20.6%</div>
<div class="abs" style="left:216.89999999999998px;top:167.5px;width:10.3px;height:1px;background:#ddd"></div>
<div class="abs" style="left:253.49999999999997px;top:167.5px;width:10px;height:1px;background:#ddd"></div>
<svg class="abs" style="left:261.4px;top:166px" width="4" height="4" viewBox="0 0 4 4"><path d="M0.5 0.3 L3.2 2 L0.5 3.7" fill="none" stroke="#ccc" stroke-width="0.8"/></svg>
<div class="abs" style="left:120.8px;top:182.0px;width:1px;height:46.0px;background:#f9f9f9"></div>
<div class="abs" style="left:241.89999999999998px;top:182.0px;width:1px;height:46.0px;background:#f9f9f9"></div>
<div class="abs" style="left:362.99999999999994px;top:182.0px;width:1px;height:46.0px;background:#f9f9f9"></div>
<div class="t" style="left:60.75px;top:194.9px;font-size:10.8px;color:#626262;font-weight:bold;transform:translate(calc(-50% + -0.446px),-50%);letter-spacing:-0.892px;margin-right:0.892px;">Purchased</div>
<div class="t" style="left:181.84999999999997px;top:194.9px;font-size:10.8px;color:#626262;font-weight:bold;transform:translate(calc(-50% + -0.401px),-50%);letter-spacing:-0.803px;margin-right:0.803px;">Site Search</div>
<div class="t" style="left:266.8px;top:195.0px;font-size:10.8px;color:#626262;font-weight:bold;transform:translate(0,-50%);letter-spacing:-1.012px;margin-right:1.012px;">Did not do Login</div>
<div class="t" style="left:270.2px;top:205.1px;font-size:10.8px;color:#999;font-weight:normal;transform:translate(0,-50%);letter-spacing:-0.610px;margin-right:0.610px;">at least 5 times</div>
<div class="t" style="left:181.84999999999997px;top:216.1px;font-size:7.2px;color:#aaa;transform:translate(-50%,-50%)">Show 1 more condition</div>
</div>
<div class="t" style="left:503.2px;top:477.7px;font-size:10.5px;color:#808080;font-weight:normal;transform:translate(calc(-100% + -0.508px),-50%);letter-spacing:-0.508px;margin-right:0.508px;">Apr 2, 2023 - May 1, 2023</div>
<div class="t" style="left:473.1px;top:505.8px;font-size:5.2px;color:#666;font-weight:bold;transform:translate(calc(-50% + -0.175px),-50%);letter-spacing:-0.349px;margin-right:0.349px;">START</div>
<div class="t" style="left:473.1px;top:520.4px;font-size:9.6px;color:#555;font-weight:bold;transform:translate(-50%,-50%);">10,000</div>
<div class="abs" style="left:472.6px;top:528.1px;width:1px;height:23.2px;background:#8c96f9"></div>
<div class="t" style="left:473.1px;top:574.3000000000001px;font-size:20.5px;color:#4054ff;font-weight:bold;transform:translate(calc(-50% + -1.163px),-50%);letter-spacing:-2.325px;margin-right:2.325px;">17.7%</div>
<div class="t" style="left:473.1px;top:594.4px;font-size:5.2px;color:#4054ff;font-weight:bold;transform:translate(calc(-50% + -0.063px),-50%);letter-spacing:-0.126px;margin-right:0.126px;">CONVERSION</div>
<div class="abs" style="left:472.6px;top:603.6px;width:1px;height:20.5px;background:#8c96f9"></div>
<svg class="abs" style="left:470.90000000000003px;top:622.9px" width="4.4" height="4" viewBox="0 0 4.4 4"><path d="M0 0 L4.4 0 L2.2 4 Z" fill="#4054ff"/></svg>
<div class="t" style="left:473.1px;top:637.4px;font-size:9.6px;color:#555;font-weight:bold;transform:translate(-50%,-50%);">1,774</div>
<div class="t" style="left:473.1px;top:651.1px;font-size:5.2px;color:#666;font-weight:bold;transform:translate(calc(-50% + -0.130px),-50%);letter-spacing:-0.260px;margin-right:0.260px;">END</div>
<svg class="abs" style="left:0;top:0" width="1024" height="747" viewBox="0 0 1024 747"><rect x="114.4" y="714.0" width="328.6" height="10.5" fill="#f4f4f4"/><rect x="124.7" y="715.2" width="277.6" height="8.1" fill="#c1c1c1"/><path d="M120.8 717.4 L118.4 719.25 L120.8 721.1 Z" fill="#8a8a8a"/><path d="M436.4 717.4 L438.8 719.25 L436.4 721.1 Z" fill="#333"/><rect x="43.9" y="485.2" width="10.7" height="237.6" fill="#f4f4f4"/><rect x="45.1" y="496" width="8.1" height="215" fill="#c1c1c1"/><path d="M47.199999999999996 492 L49.15 489.8 L51.1 492 Z" fill="#8a8a8a"/><path d="M47.199999999999996 715.7 L49.15 718 L51.1 715.7 Z" fill="#333"/></svg>
<svg class="abs" style="left:0;top:0" width="1024" height="747" viewBox="0 0 1024 747"><rect x="599.95" y="519.1" width="328.04999999999995" height="37.0" fill="#f7f7f7"/><rect x="599.95" y="593.1" width="328.04999999999995" height="37.0" fill="#f7f7f7"/></svg>
<div class="abs" style="left:599.45px;top:486px;width:1px;height:181.0px;background:#e4e4e4"></div>
<div class="abs" style="left:599.95px;top:666.5px;width:328.04999999999995px;height:1px;background:#dcdcdc"></div>
<div class="abs" style="left:596.45px;top:521.5px;width:3px;height:1px;background:#777"></div>
<div class="t" style="left:589.95px;top:523.4px;font-size:9.6px;color:#555;font-weight:normal;transform:translate(calc(-100% + 0.106px),-50%);letter-spacing:0.106px;margin-right:-0.106px;">46,660</div>
<div class="abs" style="left:596.45px;top:558.6px;width:3px;height:1px;background:#777"></div>
<div class="t" style="left:589.95px;top:560.5px;font-size:9.6px;color:#555;font-weight:normal;transform:translate(calc(-100% + 0.106px),-50%);letter-spacing:0.106px;margin-right:-0.106px;">34,995</div>
<div class="abs" style="left:596.45px;top:595.5px;width:3px;height:1px;background:#777"></div>
<div class="t" style="left:589.95px;top:597.4px;font-size:9.6px;color:#555;font-weight:normal;transform:translate(calc(-100% + -0.061px),-50%);letter-spacing:-0.061px;margin-right:0.061px;">23,330</div>
<div class="abs" style="left:596.45px;top:632.0px;width:3px;height:1px;background:#777"></div>
<div class="t" style="left:589.95px;top:633.9px;font-size:9.6px;color:#555;font-weight:normal;transform:translate(calc(-100% + -0.558px),-50%);letter-spacing:-0.558px;margin-right:0.558px;">11,665</div>
<div class="t" style="left:574.95px;top:505.8px;font-size:6.4px;color:#666;font-weight:bold;transform:translate(calc(-50% + 0.036px),-50%);letter-spacing:0.073px;margin-right:-0.073px;">PEOPLE</div>
<div class="abs" style="left:599px;top:486px;width:329px;height:239px;overflow:hidden">
<svg class="abs" style="left:0;top:0" width="329" height="185"><rect x="41.20" y="33.10" width="40.7" height="147.90" fill="#4054ff"/></svg>
<div class="t" style="left:61.55000000000005px;top:20.00000000000002px;font-size:8.2px;color:#555;transform:translate(-50%,-50%)">46,660</div>
<svg class="abs" style="left:0;top:0" width="329" height="185"><rect x="162.40" y="160.00" width="40.7" height="21.00" fill="#4054ff"/></svg>
<div class="t" style="left:182.75000000000006px;top:146.9px;font-size:8.2px;color:#555;transform:translate(-50%,-50%)">6,506</div>
<svg class="abs" style="left:0;top:0" width="329" height="185"><rect x="283.60" y="172.00" width="40.7" height="9.00" fill="#4054ff"/></svg>
<div class="t" style="left:303.95000000000005px;top:158.9px;font-size:8.2px;color:#555;transform:translate(-50%,-50%)">2,851</div>
<div class="t" style="left:120.25000000000004px;top:168.6px;font-size:6.4px;color:#555;font-weight:bold;transform:translate(calc(-50% + -0.105px),-50%);letter-spacing:-0.209px;margin-right:0.209px;">13.9%</div>
<div class="abs" style="left:96.65000000000005px;top:167.5px;width:10.3px;height:1px;background:#ddd"></div>
<div class="abs" style="left:133.25000000000006px;top:167.5px;width:10px;height:1px;background:#ddd"></div>
<svg class="abs" style="left:141.15000000000003px;top:166px" width="4" height="4" viewBox="0 0 4 4"><path d="M0.5 0.3 L3.2 2 L0.5 3.7" fill="none" stroke="#ccc" stroke-width="0.8"/></svg>
<div class="t" style="left:241.45000000000005px;top:168.6px;font-size:6.4px;color:#555;font-weight:bold;transform:translate(calc(-50% + 0.015px),-50%);letter-spacing:0.031px;margin-right:-0.031px;">43.8%</div>
<div class="abs" style="left:217.85000000000005px;top:167.5px;width:10.3px;height:1px;background:#ddd"></div>
<div class="abs" style="left:254.45000000000005px;top:167.5px;width:10px;height:1px;background:#ddd"></div>
<svg class="abs" style="left:262.35px;top:166px" width="4" height="4" viewBox="0 0 4 4"><path d="M0.5 0.3 L3.2 2 L0.5 3.7" fill="none" stroke="#ccc" stroke-width="0.8"/></svg>
<div class="abs" style="left:121.65000000000005px;top:182.0px;width:1px;height:46.0px;background:#f9f9f9"></div>
<div class="abs" style="left:242.85000000000005px;top:182.0px;width:1px;height:46.0px;background:#f9f9f9"></div>
<div class="abs" style="left:364.05000000000007px;top:182.0px;width:1px;height:46.0px;background:#f9f9f9"></div>
<div class="t" style="left:61.55000000000005px;top:194.9px;font-size:10.8px;color:#626262;font-weight:bold;transform:translate(calc(-50% + -0.385px),-50%);letter-spacing:-0.769px;margin-right:0.769px;">Visited site</div>
<div class="t" style="left:182.75000000000006px;top:194.9px;font-size:10.8px;color:#626262;font-weight:bold;transform:translate(calc(-50% + -0.323px),-50%);letter-spacing:-0.646px;margin-right:0.646px;">Added to Cart</div>
<div class="t" style="left:303.95000000000005px;top:194.9px;font-size:10.8px;color:#626262;font-weight:bold;transform:translate(calc(-50% + -0.446px),-50%);letter-spacing:-0.892px;margin-right:0.892px;">Purchased</div>
<div class="t" style="left:182.75000000000006px;top:216.1px;font-size:7.2px;color:#aaa;transform:translate(-50%,-50%)">Show 1 more condition</div>
</div>
<div class="t" style="left:988.6px;top:478.4px;font-size:10.5px;color:#808080;font-weight:normal;transform:translate(calc(-100% + -0.667px),-50%);letter-spacing:-0.667px;margin-right:0.667px;">Oct 1, 2018 - Oct 31, 2018</div>
<div class="t" style="left:958.1px;top:505.8px;font-size:5.2px;color:#666;font-weight:bold;transform:translate(calc(-50% + -0.175px),-50%);letter-spacing:-0.349px;margin-right:0.349px;">START</div>
<div class="t" style="left:958.1px;top:520.4px;font-size:9.6px;color:#555;font-weight:bold;transform:translate(-50%,-50%);">46,660</div>
<div class="abs" style="left:957.6px;top:528.1px;width:1px;height:23.2px;background:#8c96f9"></div>
<div class="t" style="left:958.1px;top:574.3000000000001px;font-size:20.5px;color:#4054ff;font-weight:bold;transform:translate(calc(-50% + -1.091px),-50%);letter-spacing:-2.181px;margin-right:2.181px;">6.1%</div>
<div class="t" style="left:958.1px;top:594.4px;font-size:5.2px;color:#4054ff;font-weight:bold;transform:translate(calc(-50% + -0.063px),-50%);letter-spacing:-0.126px;margin-right:0.126px;">CONVERSION</div>
<div class="abs" style="left:957.6px;top:603.6px;width:1px;height:20.5px;background:#8c96f9"></div>
<svg class="abs" style="left:955.9px;top:622.9px" width="4.4" height="4" viewBox="0 0 4.4 4"><path d="M0 0 L4.4 0 L2.2 4 Z" fill="#4054ff"/></svg>
<div class="t" style="left:958.1px;top:637.4px;font-size:9.6px;color:#555;font-weight:bold;transform:translate(-50%,-50%);">2,851</div>
<div class="t" style="left:958.1px;top:651.1px;font-size:5.2px;color:#666;font-weight:bold;transform:translate(calc(-50% + -0.130px),-50%);letter-spacing:-0.260px;margin-right:0.260px;">END</div>
<svg class="abs" style="left:0;top:0" width="1024" height="747" viewBox="0 0 1024 747"><rect x="599.2" y="714.0" width="328.8" height="10.5" fill="#f4f4f4"/><rect x="609.8" y="715.2" width="277.30000000000007" height="8.1" fill="#c1c1c1"/><path d="M605.6 717.4 L603.2 719.25 L605.6 721.1 Z" fill="#8a8a8a"/><path d="M921.4 717.4 L923.8 719.25 L921.4 721.1 Z" fill="#333"/><rect x="528.9" y="485.2" width="10.7" height="237.6" fill="#f4f4f4"/><rect x="530.1" y="496" width="8.1" height="215" fill="#c1c1c1"/><path d="M532.1999999999999 492 L534.15 489.8 L536.1 492 Z" fill="#8a8a8a"/><path d="M532.1999999999999 715.7 L534.15 718 L536.1 715.7 Z" fill="#333"/></svg>
</body></html>
